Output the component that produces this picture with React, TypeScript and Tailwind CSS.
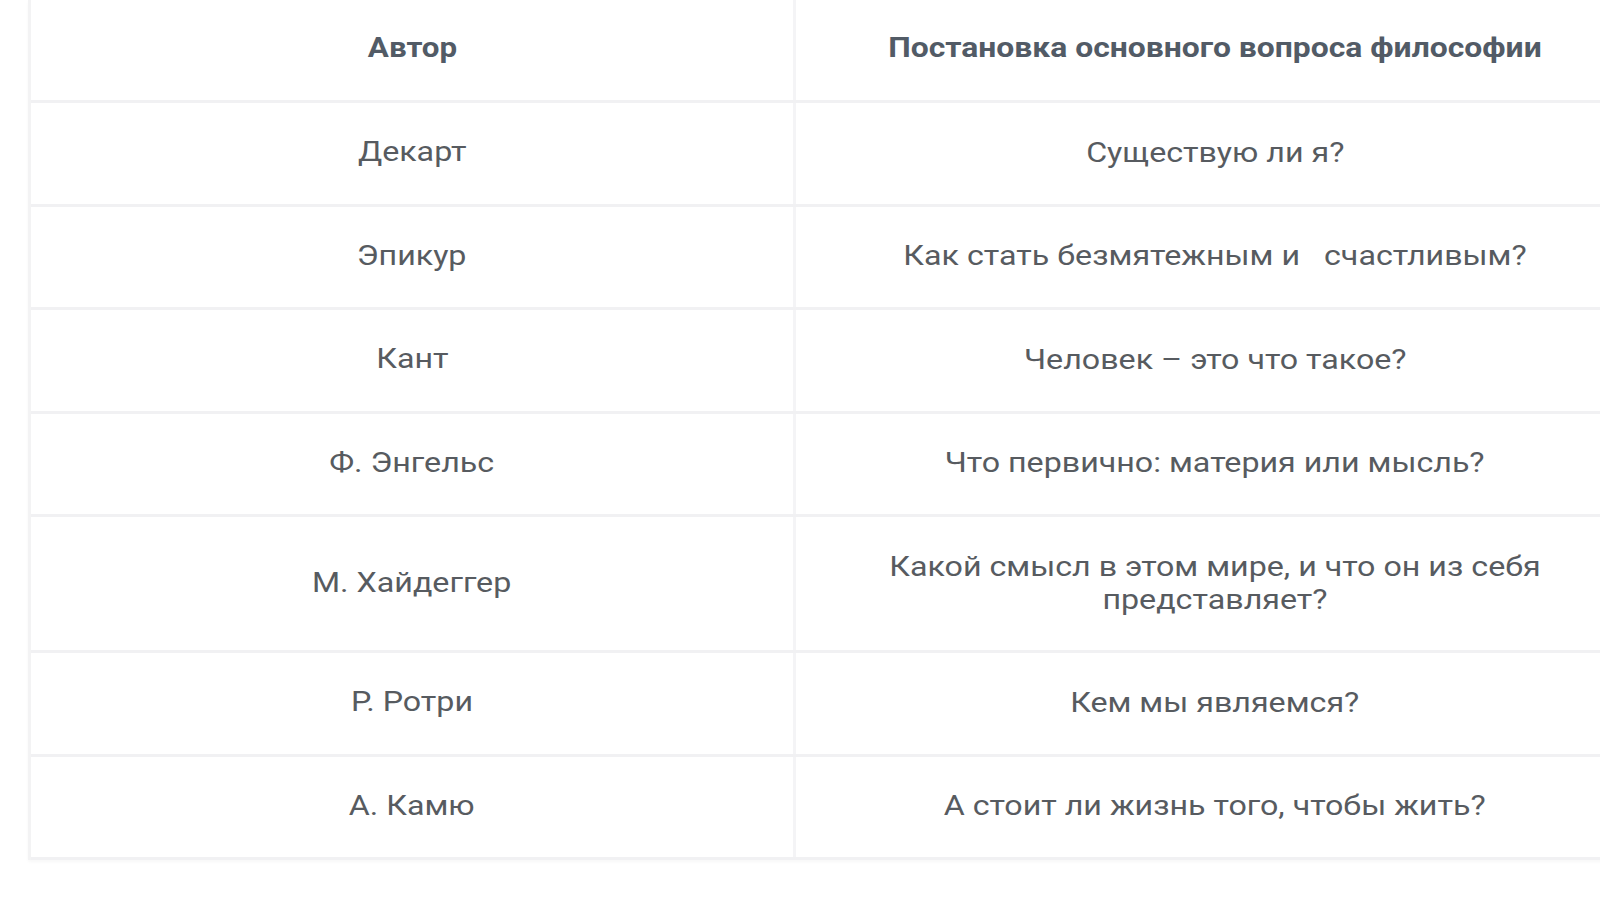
export default function App() {
  const rows: { author: string; question: string; tall?: boolean }[] = [
    { author: "Декарт", question: "Существую ли я?" },
    { author: "Эпикур", question: "Как стать безмятежным и\u00a0\u00a0 счастливым?" },
    { author: "Кант", question: "Человек – это что такое?" },
    { author: "Ф. Энгельс", question: "Что первично: материя или мысль?" },
    { author: "М. Хайдеггер", question: "Какой смысл в этом мире, и что он из себя представляет?", tall: true },
    { author: "Р. Ротри", question: "Кем мы являемся?" },
    { author: "А. Камю", question: "А стоит ли жизнь того, чтобы жить?" },
  ];

  return (
    <div className="w-[1600px] h-[899px] overflow-hidden bg-white pl-[28px] font-['Roboto',_'Liberation_Sans',_sans-serif]">
      <div className="w-[1610px] border-l-[3px] border-[#f3f3f4] shadow-[0_2px_3px_rgba(0,0,0,0.03)]">
        {/* Header */}
        <div className="grid grid-cols-[765px_1fr] h-[103px] border-b-[3px] border-[#f1f1f3]">
          <div className="flex items-center justify-center pb-[3px] border-r-[3px] border-[#f4f4f6]">
            <span className="inline-block scale-x-[1.16] text-[27px] font-bold text-[#525b66]">Автор</span>
          </div>
          <div className="flex items-center justify-center pb-[3px] pr-[4px]">
            <span className="inline-block scale-x-[1.18] text-[27px] font-bold text-[#525b66]">
              Постановка основного вопроса философии
            </span>
          </div>
        </div>
        {rows.map((r) => (
          <div
            key={r.author}
            className={
              "grid grid-cols-[765px_1fr] border-b-[3px] border-[#f1f1f3] " +
              (r.tall ? "h-[136px]" : "h-[103.5px]")
            }
          >
            <div className="flex items-center justify-center pb-[2px] border-r-[3px] border-[#f4f4f6]">
              <span className="inline-block scale-x-[1.15] text-[28px] text-[#575b60]">{r.author}</span>
            </div>
            <div className="flex items-center justify-center pb-[2px] pr-[4px]">
              <span
                className={
                  "inline-block scale-x-[1.15] text-[28px] leading-[33px] text-center text-[#575b60] " +
                  (r.tall ? "w-[600px]" : "")
                }
              >
                {r.question}
              </span>
            </div>
          </div>
        ))}
      </div>
    </div>
  );
}
